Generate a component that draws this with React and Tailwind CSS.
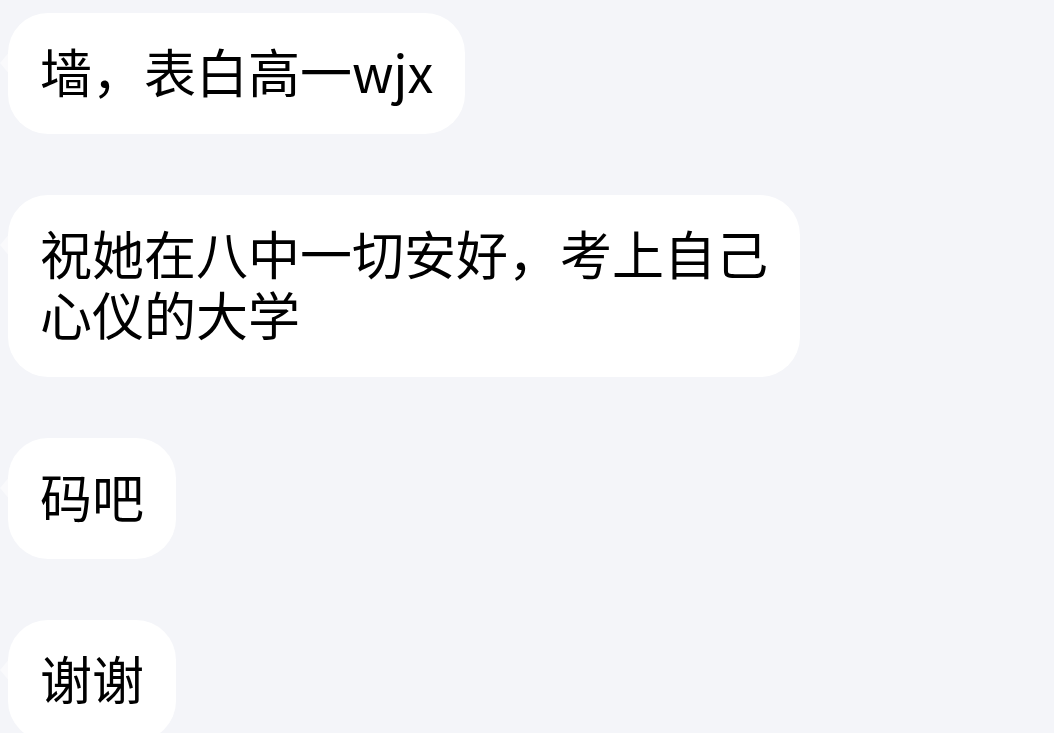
const messages = [
  "墙，表白高一wjx",
  "祝她在八中一切安好，考上自己心仪的大学",
  "码吧",
  "谢谢",
];

function Bubble({ text }) {
  return (
    <div className="relative pl-[8px]">
      <div className="absolute left-0 top-[38px] h-0 w-0 border-y-[12px] border-r-[10px] border-y-transparent border-r-white/50" />
      <div className="w-fit max-w-[792px] rounded-[40px] bg-white px-[32px] pt-[27px] pb-[33px] text-[52px] leading-[61px] text-black">
        {text}
      </div>
    </div>
  );
}

export default function App() {
  return (
    <div
      className="h-[733px] w-full overflow-hidden bg-[#f4f5f9] pt-[13px]"
      style={{ fontFamily: '"Noto Sans CJK SC", "Noto Sans", sans-serif' }}
    >
      <div className="flex flex-col gap-[61px]">
        {messages.map((m, i) => (
          <Bubble key={i} text={m} />
        ))}
      </div>
    </div>
  );
}
